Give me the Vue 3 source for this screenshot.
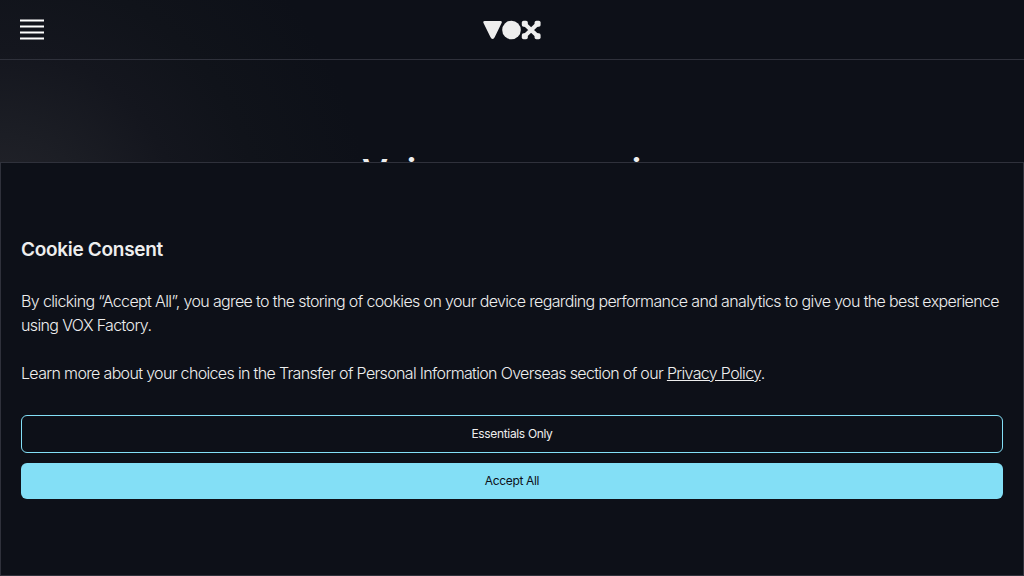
<template>
  <div class="page">
    <header class="navbar">
      <button class="menu-btn" aria-label="Menu">
        <svg width="24" height="22" viewBox="0 0 24 22" fill="none" stroke="#fff" stroke-width="2">
          <path d="M0 2.5h24M0 8.5h24M0 14.5h24M0 20.5h24" />
        </svg>
      </button>
      <svg class="logo" width="58" height="20" viewBox="0 0 58 20" fill="#eee">
        <path d="M1.8 1H17.4Q19.4 1 18.6 3L11.8 17Q10.9 18.9 9.6 18.9Q8.3 18.9 7.4 17L0.5 3Q-0.3 1 1.8 1Z" />
        <circle cx="28.5" cy="10" r="9.3" />
        <path d="M42 4.2L54.2 15.8M54.2 4.2L42 15.8" stroke="#eee" stroke-width="4" />
        <rect x="38.8" y="0.7" width="6" height="6" rx="1.8" />
        <rect x="51.6" y="0.7" width="6" height="6" rx="1.8" />
        <rect x="38.8" y="13.2" width="6" height="6" rx="1.8" />
        <rect x="51.6" y="13.2" width="6" height="6" rx="1.8" />
      </svg>
    </header>

    <main class="hero">
      <h1>Voice resources in</h1>
    </main>

    <section class="cookie-banner">
      <h2>Cookie Consent</h2>
      <p class="intro">
        By clicking “Accept All”, you agree to the storing of cookies on your device regarding
        performance and analytics to give you the best experience using VOX Factory.
      </p>
      <p>
        Learn more about your choices in the Transfer of Personal Information Overseas section of our
        <a href="#">Privacy Policy</a>.
      </p>
      <div class="actions">
        <button class="btn btn-outline">Essentials Only</button>
        <button class="btn btn-primary">Accept All</button>
      </div>
    </section>
  </div>
</template>

<script setup>
</script>

<style>
body {
  background: #0d1018;
}
</style>

<style scoped>
.page {
  position: relative;
  height: 576px;
  overflow: hidden;
  box-sizing: border-box;
  color: #eee;
  font-family: Inter, sans-serif;
  background: radial-gradient(circle at 0 230px, #26252c 0, #1c1e25 95px, #14161e 180px, #10131a 260px, #0d1018 370px);
}
.navbar {
  display: grid;
  grid-template-columns: 1fr auto 1fr;
  align-items: center;
  height: 60px;
  padding: 0 20px;
  box-sizing: border-box;
  border-bottom: 1px solid #2f313b;
}
.menu-btn {
  display: flex;
  width: 24px;
  padding: 0 0 2px;
  border: none;
  background: none;
  cursor: pointer;
}
.logo {
  display: block;
}
.hero {
  display: flex;
  justify-content: center;
  padding-top: 88px;
}
.hero h1 {
  margin: 0;
  font-size: 36px;
  line-height: 48px;
  font-weight: 600;
  letter-spacing: -0.7px;
  word-spacing: -4.5px;
  white-space: nowrap;
}
.cookie-banner {
  position: absolute;
  left: 0;
  right: 0;
  bottom: 0;
  height: 414px;
  padding: 72px 20px 0;
  box-sizing: border-box;
  border: 1px solid #2f313b;
  background: #0d1018;
}
.cookie-banner h2 {
  margin: 0 0 24px;
  font-size: 19px;
  line-height: 30px;
  font-weight: 600;
  letter-spacing: -0.3px;
}
.cookie-banner p {
  margin: 0 0 24px;
  font-size: 16px;
  line-height: 24px;
  font-weight: 300;
  letter-spacing: -0.66px;
}
.cookie-banner .intro {
  letter-spacing: -0.63px;
}
.cookie-banner a {
  color: inherit;
  text-decoration: underline;
}
.actions {
  display: flex;
  flex-direction: column;
  gap: 10px;
  padding-top: 6px;
}
.btn {
  height: 36px;
  padding: 0 0 2px;
  box-sizing: border-box;
  border: none;
  border-radius: 6px;
  font-family: inherit;
  font-size: 12px;
  font-weight: 400;
  letter-spacing: -0.34px;
  cursor: pointer;
}
.btn-outline {
  height: 38px;
  border: 1px solid #83dff6;
  background: transparent;
  color: #eee;
}
.btn-primary {
  background: #83dff6;
  color: #0d1018;
}
</style>
